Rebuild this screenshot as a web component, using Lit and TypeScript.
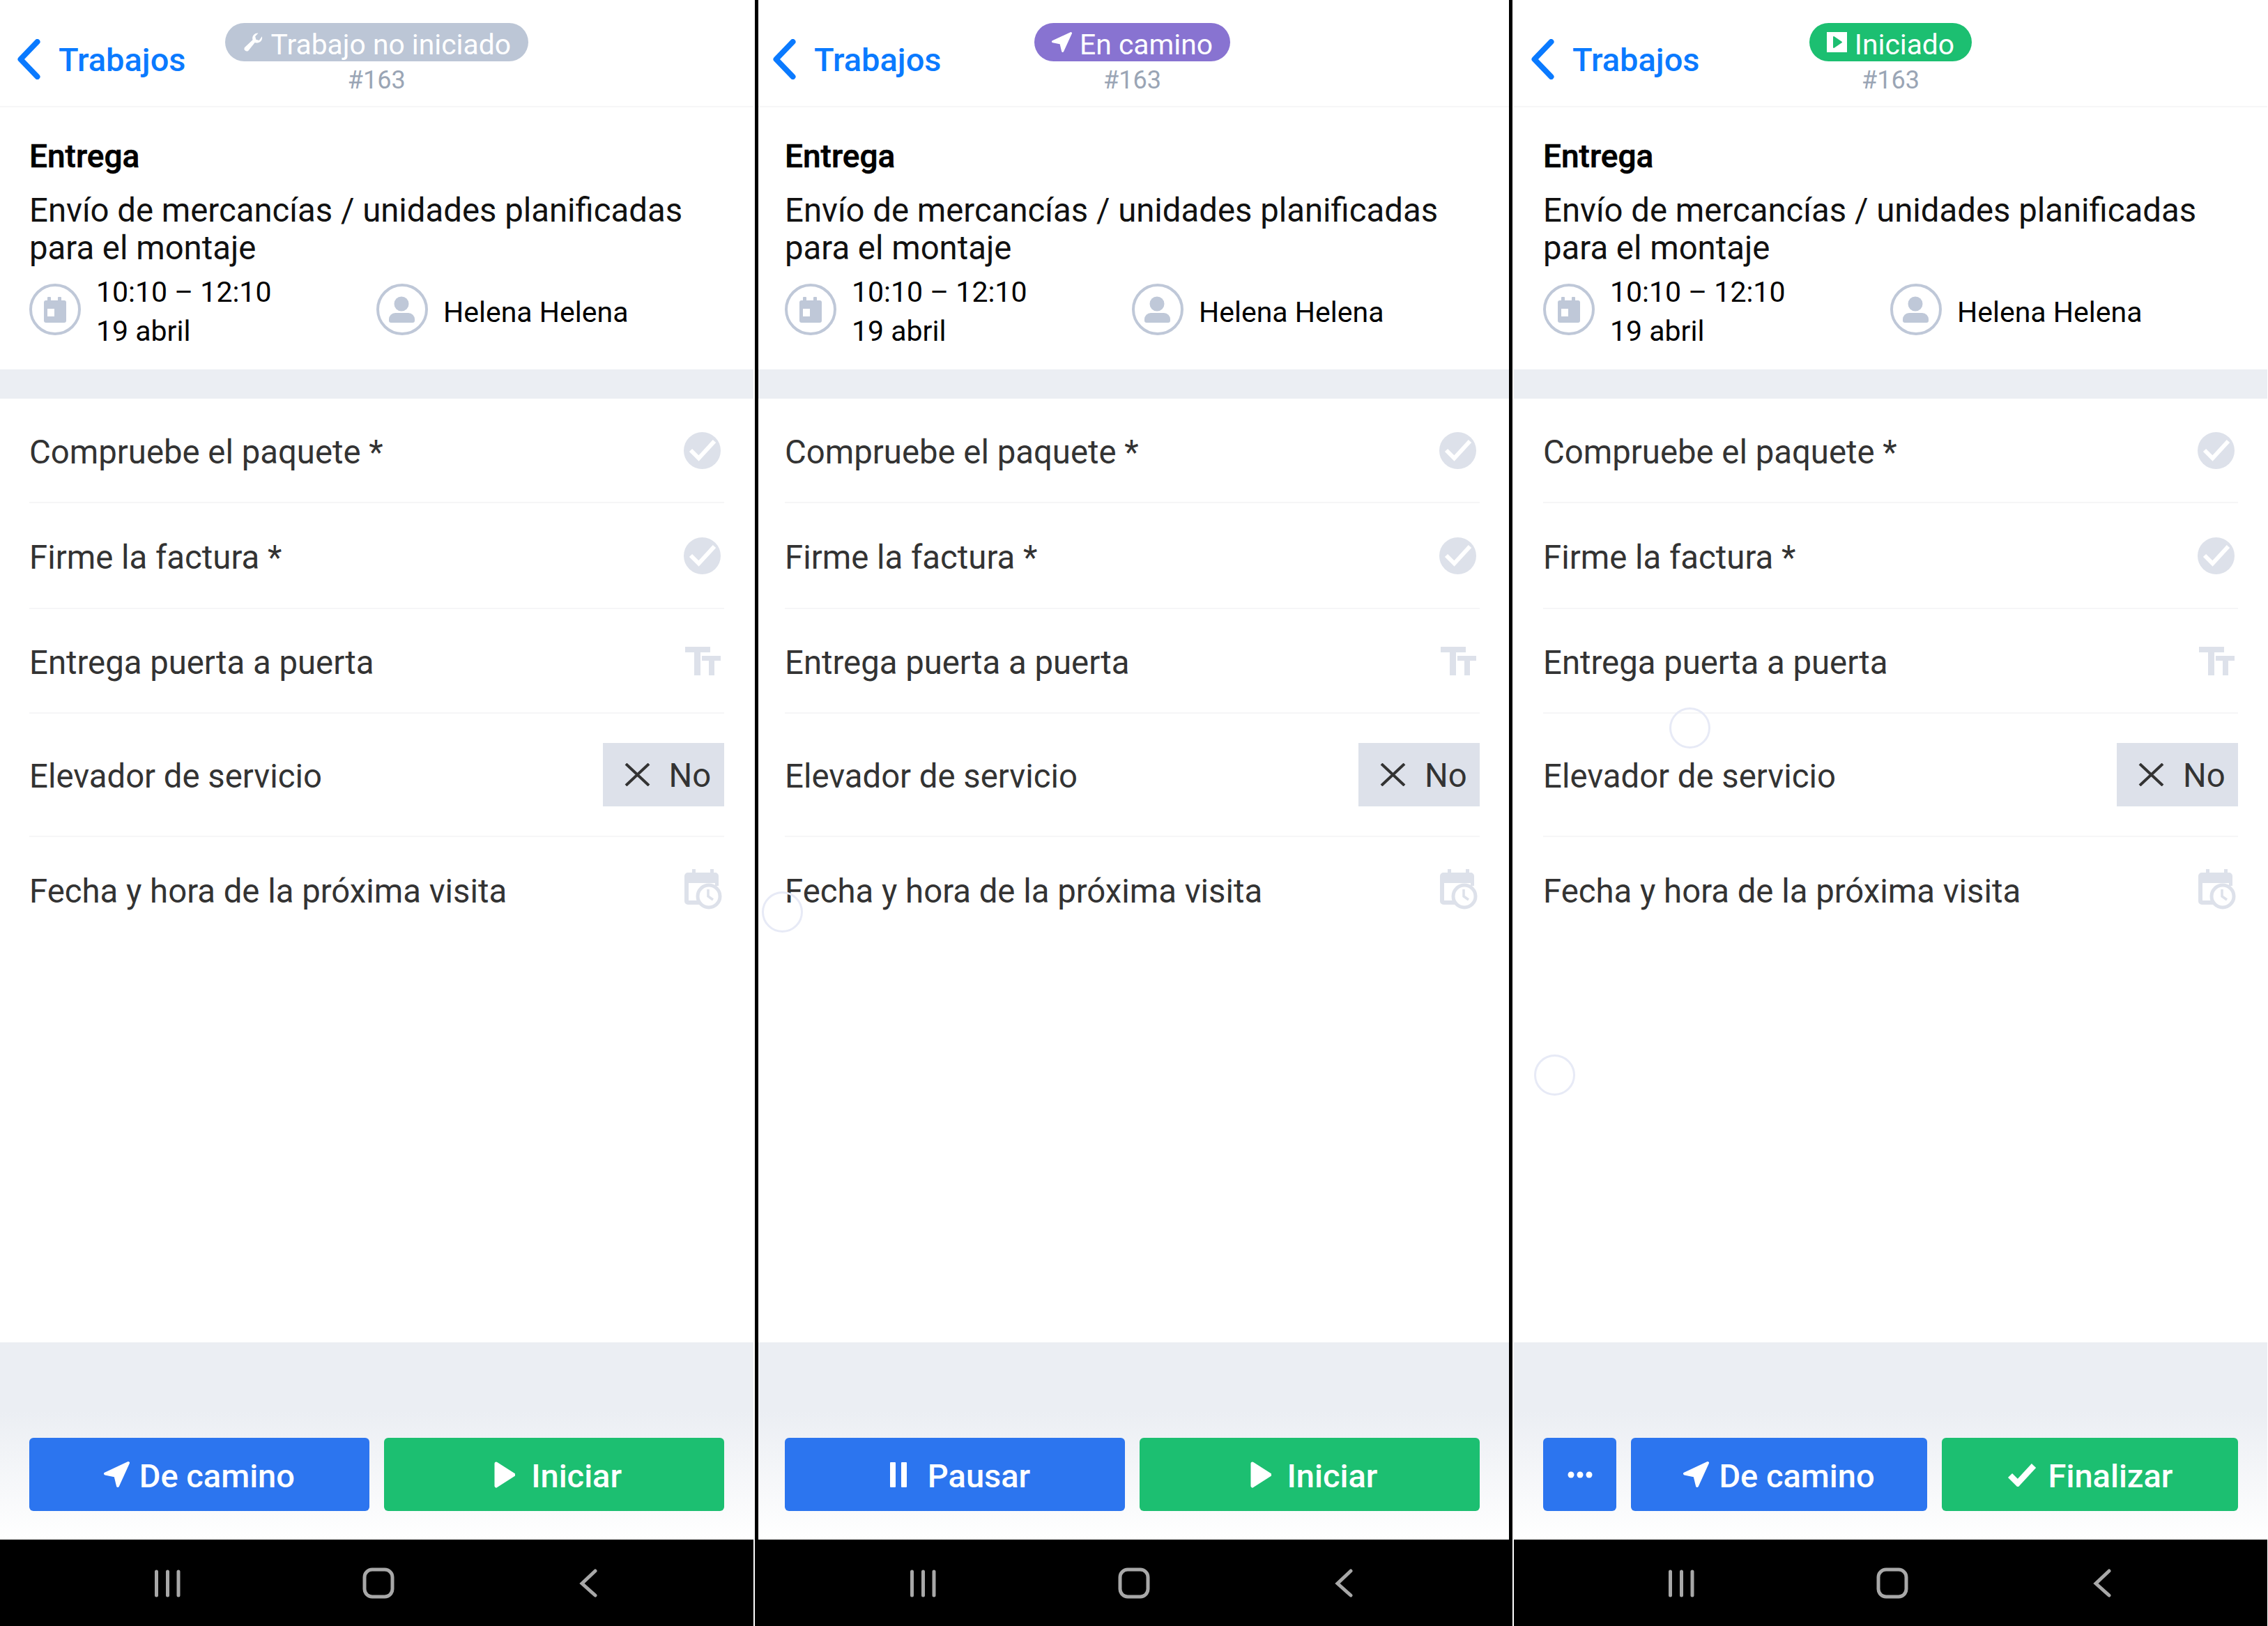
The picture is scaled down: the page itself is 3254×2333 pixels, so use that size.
import { LitElement, html, css } from "lit";
import { customElement } from "lit/decorators.js";

const arrow = (size: number) => html`<svg class="ic" width=${size} height=${size} viewBox="0 0 37 37"><path d="M35 2 2 17.500 16.500 20.500 20 35Z" fill="#fff" stroke="#fff" stroke-width="4" stroke-linejoin="round"/></svg>`;
const play = html`<svg class="ic" width="30" height="38" viewBox="0 0 30 38"><path d="M3 3 28 19 3 35Z" fill="#fff" stroke="#fff" stroke-width="5" stroke-linejoin="round"/></svg>`;
const pause = html`<svg class="ic" width="30" height="36" viewBox="0 0 30 36"><path d="M4 0h6a1 1 0 0 1 1 1v34a1 1 0 0 1-1 1H4a1 1 0 0 1-1-1V1a1 1 0 0 1 1-1ZM20 0h6a1 1 0 0 1 1 1v34a1 1 0 0 1-1 1h-6a1 1 0 0 1-1-1V1a1 1 0 0 1 1-1Z" fill="#fff"/></svg>`;
const tick = html`<svg class="ic" width="42" height="34" viewBox="0 0 42 34"><path d="M4 18 15 29 38 4" fill="none" stroke="#fff" stroke-width="8.500"/></svg>`;
const dots = html`<svg width="36" height="10" viewBox="0 0 36 10"><circle cx="5" cy="5" r="4.500" fill="#fff"/><circle cx="18" cy="5" r="4.500" fill="#fff"/><circle cx="31" cy="5" r="4.500" fill="#fff"/></svg>`;
const wrench = html`<svg class="pi" width="30" height="30" viewBox="0 0 24 24"><path d="M22.500 6.500a6 6 0 0 1-8.300 5.500L6.500 21.500a3 3 0 0 1-4.300-3.800L11.600 9A6 6 0 0 1 18 1.200L14.500 5l1 3.500 3.500 1L22.300 5Z" fill="#fff"/></svg>`;
const startBox = html`<svg class="pi" width="29" height="29" viewBox="0 0 29 29"><rect width="29" height="29" fill="#fff"/><path d="M10 7 21 14.500 10 22Z" fill="#1cbf71" stroke="#1cbf71" stroke-width="2" stroke-linejoin="round"/></svg>`;
const chevron = html`<svg class="chev" width="34" height="58" viewBox="0 0 34 58"><path d="M29.500 4 5.500 29 29.500 54" fill="none" stroke="#0a7aff" stroke-width="8" stroke-linecap="round" stroke-linejoin="round"/></svg>`;
const calMini = html`<svg width="74" height="74" viewBox="0 0 74 74"><circle cx="37" cy="37" r="35" fill="none" stroke="#bfc8d8" stroke-width="4"/><rect x="21" y="24" width="32" height="32" rx="3" fill="#bfc8d8"/><rect x="26" y="19" width="5" height="9" rx="1" fill="#bfc8d8"/><rect x="41" y="19" width="5" height="9" rx="1" fill="#bfc8d8"/><rect x="26" y="36" width="10" height="11" fill="#fff"/></svg>`;
const person = html`<svg width="74" height="74" viewBox="0 0 74 74"><circle cx="37" cy="37" r="35" fill="none" stroke="#bfc8d8" stroke-width="4"/><circle cx="36" cy="29" r="10.500" fill="#bfc8d8"/><path d="M27 42h19a9 9 0 0 1 9 9v2a3 3 0 0 1-3 3H21a3 3 0 0 1-3-3v-2a9 9 0 0 1 9-9Z" fill="#bfc8d8"/></svg>`;
const checkCircle = html`<svg width="53" height="53" viewBox="0 0 53 53"><circle cx="26.500" cy="26.500" r="26.500" fill="#dde1ea"/><path d="M10 26 21.500 37.500 44 13" fill="none" stroke="#fff" stroke-width="6"/></svg>`;
const tt = html`<svg width="51" height="41" viewBox="0 0 51 41"><path d="M0 0h36v8H22v33h-9V8H0Z" fill="#dde1ea"/><path d="M24 13h27v7H42v21h-8V20H24Z" fill="#dde1ea"/></svg>`;
const calClock = html`<svg class="cc" width="54" height="58" viewBox="0 0 54 58"><path d="M11 0h5v5h21V0h5v5h2a5 5 0 0 1 5 5v14H42a18 18 0 0 0-19 27H5a5 5 0 0 1-5-5V10a5 5 0 0 1 5-5h6Z" fill="#dde1ea"/><path d="M6 20h38v3H32a18 18 0 0 0-14 22H6Z" fill="#fff"/><circle cx="35" cy="39" r="16" fill="#fff" stroke="#dde1ea" stroke-width="5"/><path d="M34 29v10l7 5" fill="none" stroke="#dde1ea" stroke-width="3.500"/></svg>`;
const cross = html`<svg width="37" height="33" viewBox="0 0 37 33"><path d="M2 1 35 32M35 1 2 32" stroke="#333" stroke-width="4" fill="none"/></svg>`;

type Btn = { label?: string; icon: unknown; color: "blue" | "green"; cls?: string };
type Panel = { cls: string; pill: string; pillCls: string; pillIcon: unknown; btns: Btn[]; ripples: string[] };

const panels: Panel[] = [
  { cls: "one", pill: "Trabajo no iniciado", pillCls: "grey", pillIcon: wrench, ripples: [],
    btns: [{ label: "De camino", icon: arrow(37), color: "blue" }, { label: "Iniciar", icon: play, color: "green", cls: "play" }] },
  { cls: "two", pill: "En camino", pillCls: "purple", pillIcon: arrow(29), ripples: ["r-a"],
    btns: [{ label: "Pausar", icon: pause, color: "blue", cls: "pause" }, { label: "Iniciar", icon: play, color: "green", cls: "play" }] },
  { cls: "three", pill: "Iniciado", pillCls: "green", pillIcon: startBox, ripples: ["r-b", "r-c"],
    btns: [{ icon: dots, color: "blue", cls: "more" }, { label: "De camino", icon: arrow(37), color: "blue" }, { label: "Finalizar", icon: tick, color: "green", cls: "fin" }] },
];

@customElement("app-root")
export class AppRoot extends LitElement {
  static styles = css`
    :host { display: block; width: 3254px; height: 2333px; background: #000; font-family: Roboto, "Liberation Sans", sans-serif; overflow: hidden; }
    .stage { display: flex; height: 2333px; }
    .panel { position: relative; height: 100%; overflow: hidden; background: #fff; flex: none; }
    .panel.one { width: 1083px; margin-right: 5px; }
    .panel.two { width: 1077px; margin-right: 5px; }
    .panel.three { width: 1084px; padding-left: 2px; box-sizing: border-box; }
    .inner { width: 1081px; height: 100%; display: flex; flex-direction: column; background: #fff; position: relative; }
    .one .inner { width: 1080.500px; }
    .two .inner { margin-left: -4px; }

    .head { height: 152px; border-bottom: 2px solid #f6f6f7; box-sizing: content-box; display: grid; grid-template-columns: 1fr auto 1fr; flex: none; }
    .back { display: flex; align-items: center; height: 170px; align-self: start; padding-left: 24px; gap: 26px; color: #0a7aff; font-size: 47px; font-weight: 500; }
    .chev { flex: none; }
    .status { display: flex; flex-direction: column; align-items: center; padding-top: 33px; }
    .pill { height: 55px; border-radius: 28px; display: flex; align-items: center; gap: 11px; padding: 0 25px; color: #fff; font-size: 40.800px; white-space: nowrap; overflow: hidden; }
    .pill span { line-height: 55px; padding-top: 8px; }
    .pi, .pill .ic { flex: none; }
    .pill.grey { background: #bcc6d6; }
    .pill.purple { background: #8873d1; }
    .pill.green { background: #1cbf71; }
    .num { margin-top: 4px; color: #9aa5b5; font-size: 36px; line-height: 46px; }

    .info { height: 376px; flex: none; padding: 0 42px; box-sizing: border-box; color: #000; }
    .title { font-size: 46px; font-weight: 500; line-height: 54px; padding-top: 43px; -webkit-text-stroke: 0.6px #000; }
    .desc { font-size: 47.300px; line-height: 54px; margin-top: 24px; color: #111; }
    .meta { display: flex; margin-top: 2px; }
    .m { display: flex; align-items: center; gap: 22px; font-size: 41px; line-height: 56px; }
    .m div { padding-top: 6px; }
    .m:not(.when) div { padding-top: 8px; }
    .m.when { width: 498px; }
    .m svg { flex: none; }

    .band { height: 42px; flex: none; background: #ebeef3; }

    .row { margin: 0 42px; display: flex; align-items: center; justify-content: space-between; border-bottom: 2px solid #f6f6f7; color: #333; font-size: 47.300px; flex: none; box-sizing: border-box; }
    .row > span:first-child { padding-top: 5px; }
    .row.last { border-bottom: 0; }
    .row .glyph { width: 58px; display: flex; justify-content: flex-end; padding-right: 5px; }
    .cc { flex: none; margin-right: -2px; }
    .h150 { height: 150px; }
    .h152 { height: 152px; }
    .h177 { height: 177px; }
    .no { width: 174px; height: 91px; background: #dde1ea; display: flex; align-items: center; gap: 27px; padding-left: 31px; box-sizing: border-box; color: #333; font-size: 47.300px; }
    .no span { padding-top: 3px; }

    .grow { flex: 1; }
    .foot { height: 283px; flex: none; box-sizing: border-box; padding: 0 42px 41px; display: flex; align-items: flex-end; gap: 21px;
      background: linear-gradient(#ebeef3 0%, #ebeef3 35%, #fff 100%); }
    .btn { flex: 1 1 0; height: 105px; border-radius: 6px; display: flex; align-items: center; justify-content: center; gap: 14px; color: #fff; font-size: 47px; font-weight: 500; box-sizing: border-box; }
    .btn span { padding-top: 3px; }
    .btn.blue { background: #2c75ef; }
    .btn.green { background: #1cbf71; }
    .btn.more { flex: 0 0 105px; }
    .btn.play { gap: 23px; }
    .btn.pause { gap: 27px; }
    .btn.play .ic, .btn.pause .ic { margin-left: 12px; }
    .btn.fin { gap: 17px; }
    .nav { height: 124px; flex: none; background: #000; position: relative; }
    .nav svg { display: block; position: absolute; left: 0; top: 0; }

    .ripple { position: absolute; width: 59px; height: 59px; border-radius: 50%; border: 3px solid #e7eaf6; box-sizing: border-box; }
    .r-a { left: 9px; top: 1279px; }
    .r-b { left: 29px; top: 1513px; }
    .r-c { left: 223px; top: 1015px; }
  `;

  render() {
    return html`<div class="stage">
      ${panels.map((p) => html`<section class="panel ${p.cls}">
        <div class="inner">
          <header class="head">
            <div class="back">${chevron}<span>Trabajos</span></div>
            <div class="status">
              <div class="pill ${p.pillCls}">${p.pillIcon}<span>${p.pill}</span></div>
              <div class="num">#163</div>
            </div>
            <div></div>
          </header>
          <div class="info">
            <div class="title">Entrega</div>
            <div class="desc">Envío de mercancías / unidades planificadas<br />para el montaje</div>
            <div class="meta">
              <div class="m when">${calMini}<div>10:10 – 12:10<br />19 abril</div></div>
              <div class="m">${person}<div>Helena Helena</div></div>
            </div>
          </div>
          <div class="band"></div>
          <div class="row h150"><span>Compruebe el paquete *</span><span class="glyph">${checkCircle}</span></div>
          <div class="row h152"><span>Firme la factura *</span><span class="glyph">${checkCircle}</span></div>
          <div class="row h150"><span>Entrega puerta a puerta</span><span class="glyph">${tt}</span></div>
          <div class="row h177"><span>Elevador de servicio</span><div class="no">${cross}<span>No</span></div></div>
          <div class="row last h150"><span>Fecha y hora de la próxima visita</span><span class="glyph">${calClock}</span></div>
          <div class="grow"></div>
          <div class="foot">
            ${p.btns.map((b) => html`<div class="btn ${b.color} ${b.cls ?? ""}">${b.icon}${b.label ? html`<span>${b.label}</span>` : ""}</div>`)}
          </div>
          <div class="nav">
            <svg width="1081" height="124" viewBox="0 0 1081 124">
              <g fill="none" stroke="#a8a8a8" stroke-width="5" stroke-linecap="round">
                <path d="M224.500 46V80M240.500 46V80M256 46V80" />
                <rect x="523" y="43" width="40" height="39" rx="11" />
                <path d="M854 45 835 63 854 80" />
              </g>
            </svg>
          </div>
          ${p.ripples.map((r) => html`<div class="ripple ${r}"></div>`)}
        </div>
      </section>`)}
    </div>`;
  }
}
